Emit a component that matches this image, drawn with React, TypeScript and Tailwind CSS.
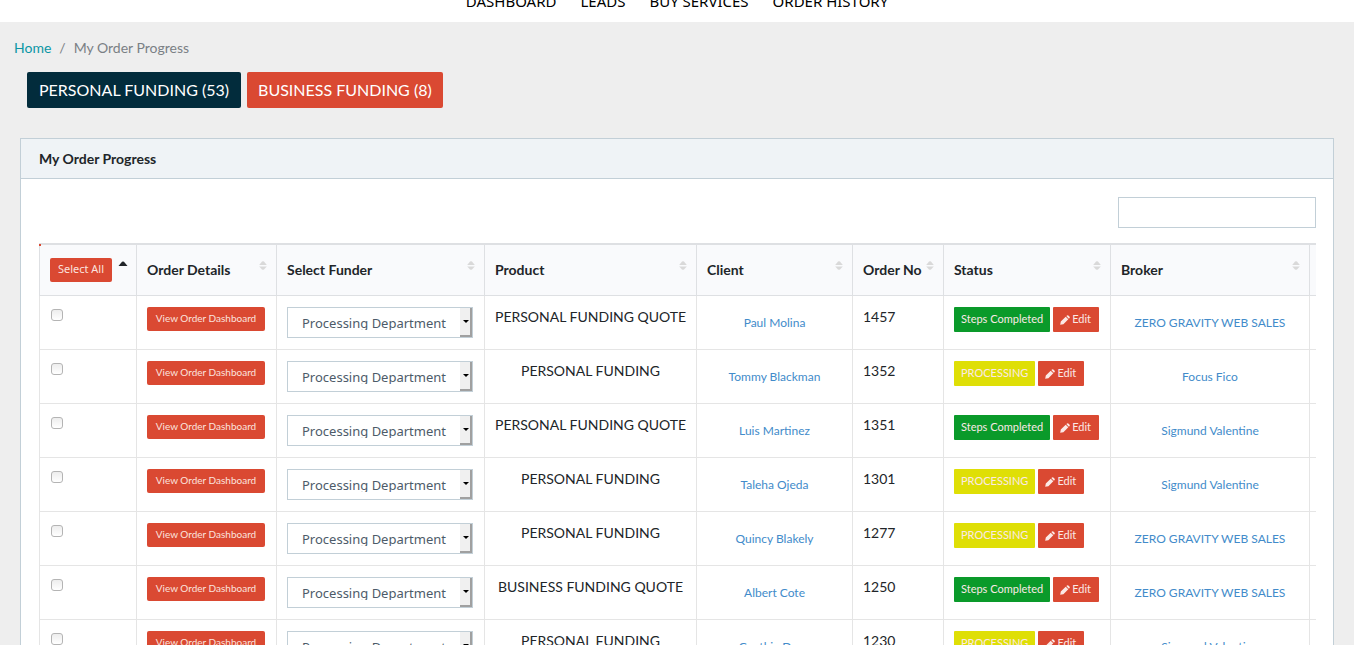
import React from "react";

const columns = [
  { title: "Order Details", width: 140 },
  { title: "Select Funder", width: 208 },
  { title: "Product", width: 212 },
  { title: "Client", width: 156 },
  { title: "Order No", width: 91 },
  { title: "Status", width: 167 },
  { title: "Broker", width: 199 },
];

type Order = { no: number; product: string; client: string; done: boolean; broker: string };

const orders: Order[] = [
  { no: 1457, product: "PERSONAL FUNDING QUOTE", client: "Paul Molina", done: true, broker: "ZERO GRAVITY WEB SALES" },
  { no: 1352, product: "PERSONAL FUNDING", client: "Tommy Blackman", done: false, broker: "Focus Fico" },
  { no: 1351, product: "PERSONAL FUNDING QUOTE", client: "Luis Martinez", done: true, broker: "Sigmund Valentine" },
  { no: 1301, product: "PERSONAL FUNDING", client: "Taleha Ojeda", done: false, broker: "Sigmund Valentine" },
  { no: 1277, product: "PERSONAL FUNDING", client: "Quincy Blakely", done: false, broker: "ZERO GRAVITY WEB SALES" },
  { no: 1250, product: "BUSINESS FUNDING QUOTE", client: "Albert Cote", done: true, broker: "ZERO GRAVITY WEB SALES" },
  { no: 1230, product: "PERSONAL FUNDING", client: "Cynthia Dean", done: false, broker: "Sigmund Valentine" },
];

function SortIcon() {
  return (
    <svg width="8" height="10" viewBox="0 0 8 10" fill="#d9d9d9" aria-hidden="true" className="mb-[6px] shrink-0">
      <path d="M0.2 4 L3 0.6 Q4 -0.2 5 0.6 L7.8 4 Z" />
      <path d="M0.2 5.5 L7.8 5.5 L5 8.4 Q4 9.2 3 8.4 Z" />
    </svg>
  );
}

function Pencil() {
  return (
    <svg width="10" height="10" viewBox="0 0 10 10" fill="currentColor" aria-hidden="true">
      <path d="M0.2 9.8 L0.8 6.6 L5.7 1.7 L8.3 4.3 L3.4 9.2 Z M6.3 1.1 L7.1 0.4 Q7.7 -0.1 8.3 0.4 L9.6 1.7 Q10.1 2.3 9.6 2.9 L8.9 3.7 Z" />
    </svg>
  );
}

function OrderRow({ order }: { order: Order }) {
  const cell = "border-r border-b border-[#e5e5e5] px-[10px] py-[11px] align-top";
  const link = "block pt-[6px] text-[12px] leading-5 text-[#428bca]";
  return (
    <tr>
      <td className="border-x border-b border-[#e5e5e5] px-[11px] py-[13px] align-top">
        <input
          type="checkbox"
          aria-label={`Select order ${order.no}`}
          className="block size-3 appearance-none rounded-[3px] border border-[#b4b4b4] bg-linear-to-b from-[#ededed] to-white checked:bg-[#4a8bc9]"
        />
      </td>
      <td className="border-r border-b border-[#e5e5e5] py-[11px] pr-[11px] pl-[10px] align-top">
        <button className="block h-6 w-full rounded-[2px] bg-[#da4932] pb-px text-[10px] whitespace-nowrap text-[#fbe3df]">
          View Order Dashboard
        </button>
      </td>
      <td className="border-r border-b border-[#e5e5e5] py-[11px] pr-[11px] pl-[10px] align-top">
        <div className="relative">
          <select
            aria-label={`Funder for order ${order.no}`}
            className="block h-[31px] w-full appearance-none border border-[#c2cfd7] bg-white pt-2 pb-[7px] pl-[14px] font-['Noto_Sans','DejaVu_Sans',sans-serif] text-[13px] leading-[14px] text-[#4d5b69]"
          >
            <option>Processing Department</option>
          </select>
          <span className="pointer-events-none absolute top-px right-px bottom-px flex w-3 items-center justify-end border-r-2 border-b-2 border-[#a0a0a0] bg-[#f0f0f0] pr-px">
            <svg width="6" height="3" viewBox="0 0 6 3" aria-hidden="true">
              <path d="M0 0 H6 L3 3 Z" />
            </svg>
          </span>
        </div>
      </td>
      <td className={`${cell} text-center text-[14px] leading-5 whitespace-nowrap`}>{order.product}</td>
      <td className={`${cell} text-center`}>
        <a href="#" className={link}>{order.client}</a>
      </td>
      <td className={`${cell} text-[14px] leading-5`}>{order.no}</td>
      <td className={cell}>
        <div className="flex gap-[3px] text-[11px] whitespace-nowrap text-[#fbe9e6]">
          {order.done ? (
            <button className="h-[25px] rounded-[1px] bg-[#0a9a2a] px-[7px]">Steps Completed</button>
          ) : (
            <button className="h-[25px] rounded-[1px] bg-[#dfdf06] px-[7px]">PROCESSING</button>
          )}
          <button className="flex h-[25px] items-center gap-[2px] rounded-[1px] bg-[#da4932] pr-2 pl-[7px]">
            <Pencil />
            Edit
          </button>
        </div>
      </td>
      <td className={`${cell} text-center`}>
        <a href="#" className={link}>{order.broker}</a>
      </td>
      <td className="border-b border-[#e5e5e5]" />
    </tr>
  );
}

export default function App() {
  return (
    <div className="h-screen overflow-hidden bg-[#eeeeee] font-['Lato',sans-serif] text-[#212529]">
      <header className="flex h-[22px] flex-col justify-end overflow-hidden bg-white">
        <nav className="flex justify-center gap-6 pb-[11px] font-['Noto_Sans',sans-serif] text-[15px] leading-5 text-black">
          <a href="#">DASHBOARD</a>
          <a href="#">LEADS</a>
          <a href="#">BUY SERVICES</a>
          <a href="#">ORDER HISTORY</a>
        </nav>
      </header>

      <main>
        <nav aria-label="Breadcrumb" className="flex gap-2 px-[14px] pt-4 text-[14px] leading-5 text-[#7a8085]">
          <a href="#" className="text-[#0b96a5]">Home</a>
          <span>/</span>
          <span>My Order Progress</span>
        </nav>

        <div className="flex gap-[6px] px-[27px] pt-[14px] text-[16px] text-white">
          <button className="h-9 rounded-[2px] bg-[#022c3c] px-3">PERSONAL FUNDING (53)</button>
          <button className="h-9 rounded-[2px] bg-[#da4932] px-[11px]">BUSINESS FUNDING (8)</button>
        </div>

        <section className="mx-5 mt-[30px] border border-[#c2cfd7] bg-white">
          <h1 className="border-b border-[#c2cfd7] bg-[#eff3f6] px-[18px] py-[10px] text-[14px] leading-[19px] font-bold">
            My Order Progress
          </h1>
          <div className="pt-[18px] pr-[17px] pb-5 pl-[18px]">
            <div className="flex justify-end">
              <input type="search" aria-label="Search orders" className="h-[31px] w-[198px] appearance-none border border-[#c2cfd7] bg-white px-2 text-[13px]" />
            </div>
            <div className="mt-[15px] overflow-hidden">
              <table className="w-[1400px] table-fixed border-separate border-spacing-0">
                <colgroup>
                  <col className="w-[98px]" />
                  {columns.map((c) => (
                    <col key={c.title} style={{ width: c.width }} />
                  ))}
                  <col />
                </colgroup>
                <thead className="bg-[#f9fafc] text-left text-[14px]">
                  <tr className="h-[53px]">
                    <th className="relative border-x border-t-2 border-b border-[#dee0e3] pr-2 pl-[10px]">
                      <span className="absolute -top-px -left-px size-[2px] bg-[#da4932]" />
                      <div className="flex justify-between">
                        <button className="h-6 w-[62px] rounded-[2px] bg-[#da4932] pb-[2px] font-['Noto_Sans',sans-serif] text-[11px] font-normal text-[#fbe3df]">
                          Select All
                        </button>
                        <svg width="10" height="6" viewBox="0 0 10 6" fill="#212529" aria-hidden="true" className="mt-[3px]">
                          <path d="M0.5 5 L4 0.8 Q5 0 6 0.8 L9.5 5 Z" />
                        </svg>
                      </div>
                    </th>
                    {columns.map((c) => (
                      <th key={c.title} className="border-t-2 border-r border-b border-[#dee0e3] pr-[9px] pb-[2px] pl-[10px] whitespace-nowrap">
                        <div className="flex items-center justify-between">
                          {c.title}
                          <SortIcon />
                        </div>
                      </th>
                    ))}
                    <th className="border-t-2 border-b border-[#dee0e3]" />
                  </tr>
                </thead>
                <tbody>
                  {orders.map((o) => (
                    <OrderRow key={o.no} order={o} />
                  ))}
                </tbody>
              </table>
            </div>
          </div>
        </section>
      </main>
    </div>
  );
}
